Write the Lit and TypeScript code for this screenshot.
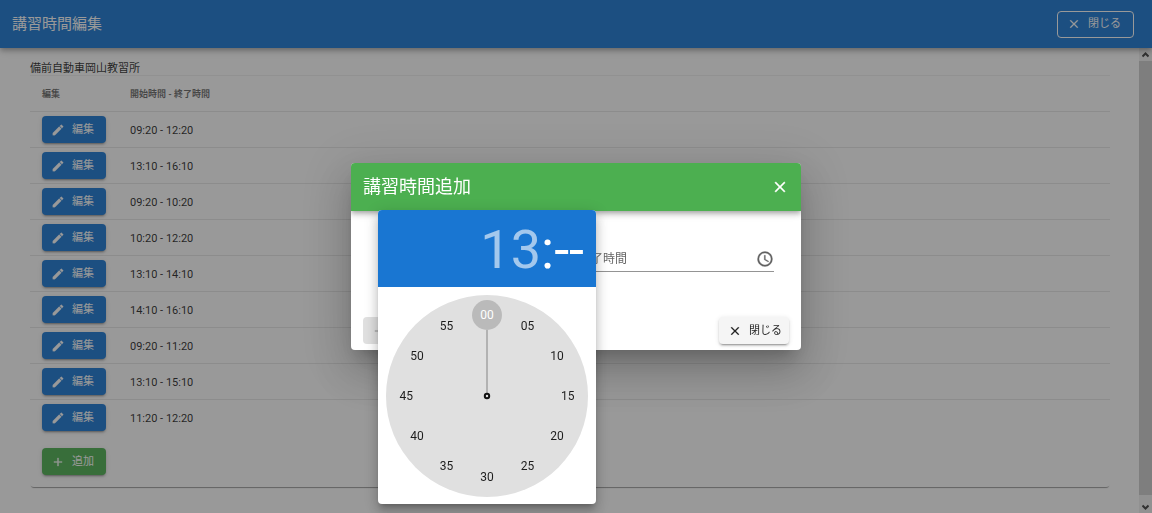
import { LitElement, html, css, svg } from "lit";
import { customElement, property, state } from "lit/decorators.js";
import { styleMap } from "lit/directives/style-map.js";
import { classMap } from "lit/directives/class-map.js";

const ICONS: Record<string, string> = {
  close:
    "M19,6.41L17.59,5L12,10.59L6.41,5L5,6.41L10.59,12L5,17.59L6.41,19L12,13.41L17.59,19L19,17.59L13.41,12L19,6.41Z",
  pencil:
    "M20.71,7.04C21.1,6.65 21.1,6 20.71,5.63L18.37,3.29C18,2.9 17.35,2.9 16.96,3.29L15.12,5.12L18.87,8.87M3,17.25V21H6.75L17.81,9.93L14.06,6.18L3,17.25Z",
  plus: "M19,13H13V19H11V13H5V11H11V5H13V11H19V13Z",
  clock:
    "M12,20A8,8 0 0,0 20,12A8,8 0 0,0 12,4A8,8 0 0,0 4,12A8,8 0 0,0 12,20M12,2A10,10 0 0,1 22,12A10,10 0 0,1 12,22C6.47,22 2,17.5 2,12A10,10 0 0,1 12,2M12.5,7V12.25L17,14.92L16.25,16.15L11,13V7H12.5Z",
};

const icon = (name: string, size: number) => html`<svg
  width=${size}
  height=${size}
  viewBox="0 0 24 24"
  fill="currentColor"
  stroke="currentColor"
  stroke-width="0.4"
  aria-hidden="true"
>
  ${svg`<path d=${ICONS[name]}></path>`}
</svg>`;

const buttonStyles = css`
  * {
    box-sizing: border-box;
  }
  svg {
    display: block;
    flex: none;
  }
  button,
  input {
    font-family: inherit;
  }
  .btn {
    display: inline-flex;
    align-items: center;
    gap: 7px;
    height: 27px;
    padding: 0 12px 0 9px;
    border: 0;
    border-radius: 4px;
    font-size: 11px;
    line-height: 16px;
    white-space: nowrap;
    color: #fff;
    box-shadow: 0 3px 1px -2px rgba(0, 0, 0, 0.2), 0 2px 2px 0 rgba(0, 0, 0, 0.14),
      0 1px 5px 0 rgba(0, 0, 0, 0.12);
  }
  .blue {
    background: #1976d2;
  }
  .green {
    background: #4caf50;
  }
  .outlined {
    background: transparent;
    border: 1px solid #fff;
    box-shadow: none;
  }
  .plain {
    padding: 0 7px 0 9px;
    background: #f5f5f5;
    color: rgba(0, 0, 0, 0.87);
  }
  .plain:disabled {
    background: #e0e0e0;
    color: rgba(0, 0, 0, 0.26);
    box-shadow: none;
  }
`;

@customElement("minute-picker")
export class MinutePicker extends LitElement {
  @property({ type: Number }) hour = 13;
  @state() private minute = 0;

  static styles = [
    buttonStyles,
    css`
      :host {
        display: block;
        border-radius: 4px;
        overflow: hidden;
        background: #fff;
      }
      .title {
        display: flex;
        justify-content: flex-end;
        align-items: center;
        height: 77px;
        padding: 2px 12px 0;
        background: #1976d2;
        color: #fff;
        font-size: 54px;
        line-height: 54px;
      }
      .hour {
        opacity: 0.6;
      }
      .body {
        padding: 8px 8px 7px;
      }
      .dial {
        position: relative;
        aspect-ratio: 1;
        border-radius: 50%;
        background: #e0e0e0;
      }
      .hand {
        position: absolute;
        inset: 0;
        width: 100%;
        height: 100%;
      }
      .tick {
        position: absolute;
        display: flex;
        align-items: center;
        justify-content: center;
        width: 30px;
        height: 30px;
        margin: -15px 0 0 -15px;
        padding: 0;
        border: 0;
        border-radius: 50%;
        background: none;
        color: rgba(0, 0, 0, 0.87);
        font-size: 12px;
      }
      .active {
        background: #bababa;
        color: #fff;
      }
    `,
  ];

  render() {
    const ticks = Array.from({ length: 12 }, (_, i) => i * 5);
    return html`
      <div class="title"><span class="hour">${this.hour}</span><span>:--</span></div>
      <div class="body">
        <div class="dial">
          <svg class="hand" viewBox="0 0 202 202" aria-hidden="true">
            <g transform="rotate(${this.minute * 6} 101 101)">
              <path d="M101 98V35" stroke="#b2b2b2" stroke-width="2" />
            </g>
            <circle cx="101" cy="101" r="2.2" fill="#e0e0e0" stroke="#111" stroke-width="2" />
          </svg>
          ${ticks.map((m) => {
            const a = (m / 30) * Math.PI;
            return html`<button
              class=${classMap({ tick: true, active: m === this.minute })}
              style=${styleMap({
                left: `${50 + 40 * Math.sin(a)}%`,
                top: `${50 - 40 * Math.cos(a)}%`,
              })}
              @click=${() => (this.minute = m)}
            >
              ${String(m).padStart(2, "0")}
            </button>`;
          })}
        </div>
      </div>
    `;
  }
}

@customElement("add-dialog")
export class AddDialog extends LitElement {
  static styles = [
    buttonStyles,
    css`
      :host {
        display: block;
        position: relative;
        width: 450px;
        max-width: 90%;
      }
      .card {
        border-radius: 4px;
        background: #fff;
        overflow: hidden;
      }
      .frame {
        border-radius: 4px;
        box-shadow: 0 11px 15px -7px rgba(0, 0, 0, 0.2), 0 24px 38px 3px rgba(0, 0, 0, 0.14),
          0 9px 46px 8px rgba(0, 0, 0, 0.12);
      }
      header {
        display: flex;
        align-items: center;
        justify-content: space-between;
        height: 48px;
        padding: 0 12px;
        background: #4caf50;
        color: #fff;
        box-shadow: 0 2px 4px -1px rgba(0, 0, 0, 0.2), 0 4px 5px 0 rgba(0, 0, 0, 0.14),
          0 1px 10px 0 rgba(0, 0, 0, 0.12);
      }
      h2 {
        margin: 0;
        font-size: 18px;
        line-height: 24px;
        font-weight: 400;
      }
      .dismiss {
        padding: 0;
        border: 0;
        background: none;
        color: inherit;
      }
      .fields {
        display: grid;
        grid-template-columns: 1fr 1fr;
        gap: 6px;
        padding: 35px 27px 45px;
      }
      .field {
        display: flex;
        align-items: center;
        height: 26px;
        border-bottom: 1px solid #949494;
        color: #616161;
      }
      input {
        flex: 1;
        min-width: 0;
        padding: 0;
        border: 0;
        outline: 0;
        background: none;
        font-size: 12px;
        line-height: 18px;
      }
      input::placeholder {
        color: #666;
        opacity: 1;
      }
      .actions {
        display: flex;
        justify-content: space-between;
        padding: 0 12px 6px;
      }
      .picker {
        position: absolute;
        top: 47px;
        left: 27px;
        width: 218px;
        box-shadow: 0 5px 5px -3px rgba(0, 0, 0, 0.2), 0 8px 10px 1px rgba(0, 0, 0, 0.14),
          0 3px 14px 2px rgba(0, 0, 0, 0.12);
      }
    `,
  ];

  render() {
    return html`
      <div class="frame">
        <div class="card">
          <header>
            <h2>講習時間追加</h2>
            <button class="dismiss" aria-label="閉じる">${icon("close", 18)}</button>
          </header>
          <div class="fields">
            <div class="field"><input aria-label="開始時間" readonly /></div>
            <div class="field">
              <input aria-label="終了時間" placeholder="終了時間" readonly />${icon("clock", 18)}
            </div>
          </div>
          <div class="actions">
            <button class="btn plain" disabled>${icon("plus", 14)}追加</button>
            <button class="btn plain">${icon("close", 14)}閉じる</button>
          </div>
        </div>
      </div>
      <minute-picker class="picker" .hour=${13}></minute-picker>
    `;
  }
}

@customElement("app-root")
export class AppRoot extends LitElement {
  @state() private slots = [
    "09:20 - 12:20",
    "13:10 - 16:10",
    "09:20 - 10:20",
    "10:20 - 12:20",
    "13:10 - 14:10",
    "14:10 - 16:10",
    "09:20 - 11:20",
    "13:10 - 15:10",
    "11:20 - 12:20",
  ];

  static styles = [
    buttonStyles,
    css`
      :host {
        display: flex;
        flex-direction: column;
        height: 100vh;
        overflow: hidden;
        background: #fff;
        color: rgba(0, 0, 0, 0.87);
        font-family: Roboto, "Noto Sans CJK JP", sans-serif;
      }
      .bar {
        display: flex;
        align-items: center;
        justify-content: space-between;
        flex: none;
        height: 48px;
        padding: 0 18px 0 12px;
        background: #1976d2;
        color: #fff;
        z-index: 1;
        box-shadow: 0 2px 4px -1px rgba(0, 0, 0, 0.2), 0 4px 5px 0 rgba(0, 0, 0, 0.14),
          0 1px 10px 0 rgba(0, 0, 0, 0.12);
      }
      h1 {
        margin: 0;
        font-size: 15px;
        line-height: 24px;
        font-weight: 400;
      }
      .main {
        display: flex;
        flex: 1;
        min-height: 0;
      }
      .content {
        flex: 1;
        padding: 0 29px 0 30px;
      }
      .card {
        padding: 12px 0;
        border-radius: 4px;
        box-shadow: 0 2px 1px -1px rgba(0, 0, 0, 0.4);
      }
      .school {
        margin: 0;
        height: 15px;
        font-size: 11px;
        line-height: 18px;
      }
      table {
        width: 100%;
        border-collapse: separate;
        border-spacing: 0;
        border-top: 1px solid #f0f0f0;
      }
      th,
      td {
        height: 36px;
        padding: 0 12px;
        text-align: left;
        border-bottom: 1px solid #e8e8e8;
        font-size: 11px;
        line-height: 16px;
      }
      th {
        color: rgba(0, 0, 0, 0.6);
        font-size: 9px;
        font-weight: 700;
      }
      tr:last-child td {
        border-bottom-color: transparent;
      }
      .edit {
        width: 88px;
      }
      .time {
        padding-top: 2px;
      }
      td .btn {
        vertical-align: middle;
      }
      .add {
        padding: 12px 12px 0;
        line-height: 0;
      }
      .scroll {
        display: flex;
        flex-direction: column;
        flex: none;
        width: 13px;
        background: #f0f0f0;
      }
      .arrow {
        display: flex;
        align-items: center;
        justify-content: center;
        height: 13px;
      }
      .thumb {
        flex: 1;
        margin-bottom: 5px;
        background: #cdcdcd;
      }
      .overlay {
        position: fixed;
        inset: 0;
        z-index: 2;
        display: flex;
        align-items: center;
        justify-content: center;
        background: rgba(33, 33, 33, 0.46);
      }
    `,
  ];

  private chevron(d: string) {
    return html`<span class="arrow"
      ><svg width="7" height="6" viewBox="0 0 7 6" fill="none" stroke="#404040" stroke-width="2">
        ${svg`<path d=${d}></path>`}
      </svg></span
    >`;
  }

  render() {
    return html`
      <header class="bar">
        <h1>講習時間編集</h1>
        <button class="btn outlined">${icon("close", 14)}閉じる</button>
      </header>
      <div class="main">
        <main class="content">
          <section class="card">
            <p class="school">備前自動車岡山教習所</p>
            <table>
              <thead>
                <tr>
                  <th class="edit">編集</th>
                  <th>開始時間 - 終了時間</th>
                </tr>
              </thead>
              <tbody>
                ${this.slots.map(
                  (s) => html`<tr>
                    <td><button class="btn blue">${icon("pencil", 14)}編集</button></td>
                    <td class="time">${s}</td>
                  </tr>`
                )}
              </tbody>
            </table>
            <div class="add"><button class="btn green">${icon("plus", 14)}追加</button></div>
          </section>
        </main>
        <div class="scroll" aria-hidden="true">
          ${this.chevron("M0.5 4.5L3.5 1.5L6.5 4.5")}
          <div class="thumb"></div>
          ${this.chevron("M0.5 1.5L3.5 4.5L6.5 1.5")}
        </div>
      </div>
      <div class="overlay"><add-dialog role="dialog" aria-label="講習時間追加"></add-dialog></div>
    `;
  }
}
